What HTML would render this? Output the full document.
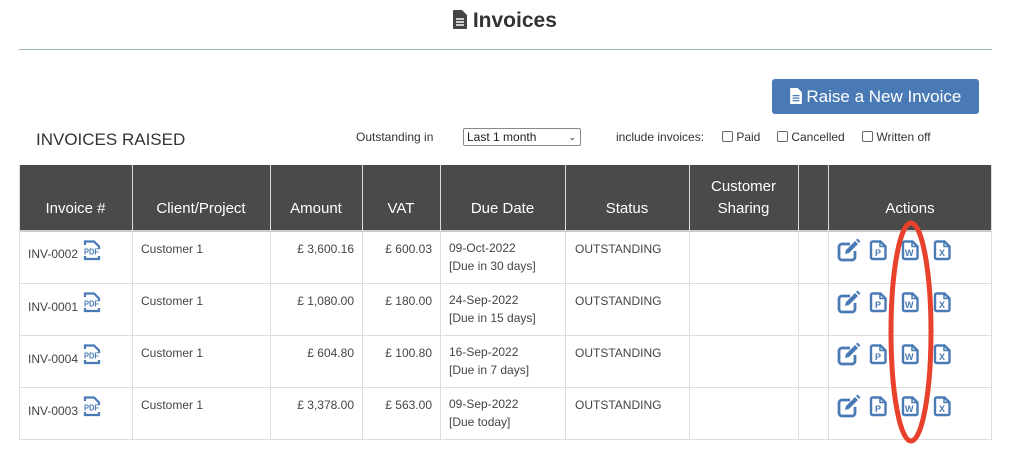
<!DOCTYPE html>
<html><head><style>
body{margin:0;width:1024px;height:470px;background:#fff;font-family:"Liberation Sans",sans-serif;position:relative;overflow:hidden;color:#444}
.a{position:absolute}
.hdr{background:#4a4a4a;color:#fff;font-size:15px;text-align:center}
.cell{font-size:12px;color:#444}
.vl{position:absolute;width:1px;background:#ddd}
.hl{position:absolute;height:1px;background:#ddd;left:19px;width:973px}
</style></head><body>
<div class="a" style="left:453px;top:9px;font-size:21px;font-weight:bold;color:#333">
<svg width="14" height="19" viewBox="0 0 14 19" style="vertical-align:-2px"><path d="M1 0h8l5 5v13a1 1 0 0 1-1 1H1a1 1 0 0 1-1-1V1a1 1 0 0 1 1-1z" fill="#444"/><path d="M3 9h8M3 12h8M3 15h8" stroke="#fff" stroke-width="1.5"/></svg> Invoices</div>
<div class="a" style="left:19px;top:49px;width:973px;height:1px;background:#9fb3bd"></div>
<div class="a" style="left:772px;top:79px;width:207px;height:35px;background:#4a7ab5;border-radius:3px;color:#fff;font-size:17px;line-height:35px;text-align:center">
<svg width="12" height="16" viewBox="0 0 14 19" style="vertical-align:-2px"><path d="M1 0h8l5 5v13a1 1 0 0 1-1 1H1a1 1 0 0 1-1-1V1a1 1 0 0 1 1-1z" fill="#fff"/><path d="M3 9h8M3 12h8M3 15h8" stroke="#4a7ab5" stroke-width="1.5"/></svg> Raise a New Invoice</div>
<div class="a" style="left:36px;top:130px;font-size:17px;color:#333">INVOICES RAISED</div>
<div class="a" style="left:356px;top:130px;font-size:12px;color:#333">Outstanding in</div>
<div class="a" style="left:463px;top:128px;width:113px;height:16px;border:1px solid #888;border-radius:2px;font-size:12px;line-height:16px;padding-left:3px;color:#222">Last 1 month<span style="position:absolute;right:4px;font-size:9px">&#8964;</span></div>
<div class="a" style="left:616px;top:130px;font-size:12px;color:#333">include invoices:</div>
<div class="a" style="left:722px;top:130px;font-size:12px;color:#333"><span style="display:inline-block;width:9px;height:9px;border:1px solid #666;border-radius:2px;vertical-align:-1px"></span> Paid</div>
<div class="a" style="left:777px;top:130px;font-size:12px;color:#333"><span style="display:inline-block;width:9px;height:9px;border:1px solid #666;border-radius:2px;vertical-align:-1px"></span> Cancelled</div>
<div class="a" style="left:862px;top:130px;font-size:12px;color:#333"><span style="display:inline-block;width:9px;height:9px;border:1px solid #666;border-radius:2px;vertical-align:-1px"></span> Written off</div>

<div class="a" style="left:19px;top:165px;width:973px;height:65px;background:#4a4a4a"></div>
<div class="a" style="left:19px;top:230px;width:973px;height:2px;background:#ccc"></div>
<div class="a hdr" style="left:19px;top:200px;width:113px">Invoice #</div>
<div class="a hdr" style="left:132px;top:200px;width:138px">Client/Project</div>
<div class="a hdr" style="left:270px;top:200px;width:92px">Amount</div>
<div class="a hdr" style="left:362px;top:200px;width:78px">VAT</div>
<div class="a hdr" style="left:440px;top:200px;width:125px">Due Date</div>
<div class="a hdr" style="left:565px;top:200px;width:124px">Status</div>
<div class="a hdr" style="left:689px;top:176px;width:109px;line-height:22px">Customer<br>Sharing</div>
<div class="a hdr" style="left:828px;top:200px;width:164px">Actions</div>

<div class="vl" style="left:19px;top:165px;height:275px"></div>
<div class="vl" style="left:132px;top:165px;height:275px"></div>
<div class="vl" style="left:270px;top:165px;height:275px"></div>
<div class="vl" style="left:362px;top:165px;height:275px"></div>
<div class="vl" style="left:440px;top:165px;height:275px"></div>
<div class="vl" style="left:565px;top:165px;height:275px"></div>
<div class="vl" style="left:689px;top:165px;height:275px"></div>
<div class="vl" style="left:798px;top:165px;height:275px"></div>
<div class="vl" style="left:828px;top:165px;height:275px"></div>
<div class="vl" style="left:991px;top:165px;height:275px"></div>
<div class="hl" style="top:283px"></div>
<div class="hl" style="top:335px"></div>
<div class="hl" style="top:387px"></div>
<div class="hl" style="top:439px"></div>

<svg width="0" height="0" style="position:absolute"><defs>
<g id="doc"><path d="M2.5 1.5h8l5 5v11a1.5 1.5 0 0 1-1.5 1.5H2.5A1.5 1.5 0 0 1 1 17.5V3a1.5 1.5 0 0 1 1.5-1.5z" fill="none" stroke="#4a7ab5" stroke-width="2.4"/><path d="M10 1.5v5h5.5" fill="none" stroke="#4a7ab5" stroke-width="1.5"/></g>
<g id="pdf"><path d="M2 5V1.5h9l5 5V9M2 16v3h14v-3" fill="none" stroke="#4a7ab5" stroke-width="2.2"/><text x="1" y="14.5" font-size="8" font-weight="bold" fill="#4a7ab5" font-family="Liberation Sans" textLength="15" lengthAdjust="spacingAndGlyphs">PDF</text></g>
</defs></svg>

<div class="a cell" style="left:28px;top:247px">INV-0002</div>
<div class="a cell" style="left:28px;top:300px">INV-0001</div>
<div class="a cell" style="left:28px;top:352px">INV-0004</div>
<div class="a cell" style="left:28px;top:404px">INV-0003</div>
<svg class="a" style="left:83px;top:240px" width="18" height="21"><use href="#pdf"/></svg>
<svg class="a" style="left:83px;top:292px" width="18" height="21"><use href="#pdf"/></svg>
<svg class="a" style="left:83px;top:344px" width="18" height="21"><use href="#pdf"/></svg>
<svg class="a" style="left:83px;top:396px" width="18" height="21"><use href="#pdf"/></svg>

<div class="a cell" style="left:141px;top:242px">Customer 1</div>
<div class="a cell" style="left:141px;top:294px">Customer 1</div>
<div class="a cell" style="left:141px;top:346px">Customer 1</div>
<div class="a cell" style="left:141px;top:398px">Customer 1</div>

<div class="a cell" style="left:270px;width:84px;text-align:right;top:242px">£ 3,600.16</div>
<div class="a cell" style="left:270px;width:84px;text-align:right;top:294px">£ 1,080.00</div>
<div class="a cell" style="left:270px;width:84px;text-align:right;top:346px">£ 604.80</div>
<div class="a cell" style="left:270px;width:84px;text-align:right;top:398px">£ 3,378.00</div>
<div class="a cell" style="left:362px;width:70px;text-align:right;top:242px">£ 600.03</div>
<div class="a cell" style="left:362px;width:70px;text-align:right;top:294px">£ 180.00</div>
<div class="a cell" style="left:362px;width:70px;text-align:right;top:346px">£ 100.80</div>
<div class="a cell" style="left:362px;width:70px;text-align:right;top:398px">£ 563.00</div>

<div class="a cell" style="left:449px;top:239px;line-height:18px">09-Oct-2022<br>[Due in 30 days]</div>
<div class="a cell" style="left:449px;top:291px;line-height:18px">24-Sep-2022<br>[Due in 15 days]</div>
<div class="a cell" style="left:449px;top:343px;line-height:18px">16-Sep-2022<br>[Due in 7 days]</div>
<div class="a cell" style="left:449px;top:395px;line-height:18px">09-Sep-2022<br>[Due today]</div>
<div class="a cell" style="left:575px;top:242px">OUTSTANDING</div>
<div class="a cell" style="left:575px;top:294px">OUTSTANDING</div>
<div class="a cell" style="left:575px;top:346px">OUTSTANDING</div>
<div class="a cell" style="left:575px;top:398px">OUTSTANDING</div>

<svg class="a" style="left:828px;top:231px" width="164" height="208">
<defs>
<g id="row">
<path d="M22 7h-8a3 3 0 0 0-3 3v10a3 3 0 0 0 3 3h10a3 3 0 0 0 3-3v-6" fill="none" stroke="#4a7ab5" stroke-width="2.8"/>
<path d="M17 17l1-4 9-9 3 3-9 9z" fill="#4a7ab5"/><path d="M28 3l1.5-1.5 3 3L31 6z" fill="#4a7ab5"/>
<g transform="translate(42,3)"><use href="#doc"/><text x="5" y="16" font-size="9" font-weight="bold" fill="#4a7ab5" font-family="Liberation Sans">P</text></g>
<g transform="translate(74,3)"><use href="#doc"/><text x="3" y="16" font-size="9" font-weight="bold" fill="#4a7ab5" font-family="Liberation Sans">W</text></g>
<g transform="translate(106,3)"><use href="#doc"/><text x="5" y="16" font-size="9" font-weight="bold" fill="#4a7ab5" font-family="Liberation Sans">X</text></g>
</g></defs>
<use href="#row" y="6"/><use href="#row" y="58"/><use href="#row" y="110"/><use href="#row" y="162"/>
</svg>
<svg class="a" style="left:880px;top:215px" width="62" height="235"><ellipse cx="31" cy="117" rx="20" ry="109" fill="none" stroke="#e8412c" stroke-width="5"/></svg>
</body></html>
